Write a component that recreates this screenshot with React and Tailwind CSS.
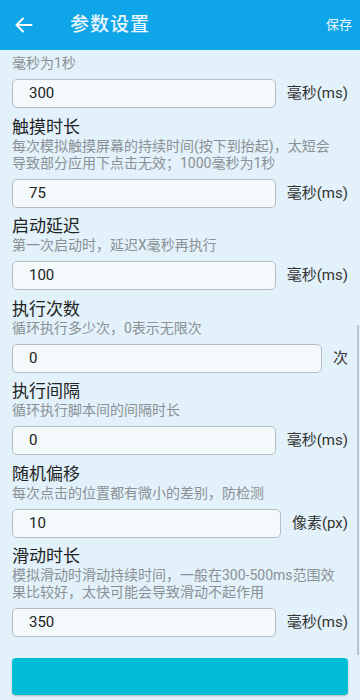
import React from 'react';

const font = { fontFamily: '"Roboto", "Noto Sans CJK SC", sans-serif' };

const sections = [
    { title: '触摸时长', desc: ['每次模拟触摸屏幕的持续时间(按下到抬起)，太短会', '导致部分应用下点击无效；1000毫秒为1秒'], value: '75', unit: '毫秒(ms)', w: 'w-[264px]' },
    { title: '启动延迟', desc: ['第一次启动时，延迟X毫秒再执行'], value: '100', unit: '毫秒(ms)', w: 'w-[264px]' },
    { title: '执行次数', desc: ['循环执行多少次，0表示无限次'], value: '0', unit: '次', w: 'w-[310px]' },
    { title: '执行间隔', desc: ['循环执行脚本间的间隔时长'], value: '0', unit: '毫秒(ms)', w: 'w-[264px]' },
    { title: '随机偏移', desc: ['每次点击的位置都有微小的差别，防检测'], value: '10', unit: '像素(px)', w: 'w-[269px]' },
    { title: '滑动时长', desc: ['模拟滑动时滑动持续时间，一般在300-500ms范围效', '果比较好，太快可能会导致滑动不起作用'], value: '350', unit: '毫秒(ms)', w: 'w-[264px]' },
];

const InputRow = ({ value, unit, w }) => (
    <div className="flex items-center justify-between mt-[7px]">
        <div className={`${w} h-[29px] rounded-[5px] border border-[#b5bec4] bg-[#f4f9fc] flex items-center pl-4 text-[15px] text-[#222]`}>
            {value}
        </div>
        <span className="text-[15px] text-[#333] leading-none">{unit}</span>
    </div>
);

const App = () => {
    return (
        <div className="w-[360px] h-[700px] overflow-hidden bg-[#e3f2fa] relative" style={font}>
            <div className="h-[50px] bg-[#0ea5e9] flex items-center">
                <svg width="18" height="16" viewBox="0 0 18 16" className="ml-[15px]" fill="none" stroke="#fff" strokeWidth="2" strokeLinecap="round" strokeLinejoin="round">
                    <path d="M16.5 8H2M8 1.5L1.5 8 8 14.5" />
                </svg>
                <span className="ml-[37px] text-[19px] font-medium text-[#eaf7fc] tracking-[1px]">参数设置</span>
                <span className="ml-auto mr-[8px] text-[13px] text-[#eaf7fc]">保存</span>
            </div>

            <div className="px-3 pt-[5px]">
                <div className="text-[14px] leading-[17px] text-[#8a9095]">毫秒为1秒</div>
                <div className="mt-[1px]">
                    <InputRow value="300" unit="毫秒(ms)" w="w-[264px]" />
                </div>

                {sections.map((s) => (
                    <div key={s.title} className="mt-[8.5px]">
                        <div className="text-[17px] leading-[21px] text-[#222]">{s.title}</div>
                        {s.desc.map((d) => (
                            <div key={d} className="text-[14px] leading-[17px] text-[#8a9095] whitespace-nowrap">{d}</div>
                        ))}
                        <InputRow value={s.value} unit={s.unit} w={s.w} />
                    </div>
                ))}

                <div className="mt-[21px] h-[37px] rounded-[4px] bg-[#00bcd4] shadow-[0_1px_2px_rgba(0,0,0,0.25)]"></div>
            </div>

            <div className="absolute right-[1px] top-[325px] w-[2px] h-[330px] bg-[#b9c6ce]"></div>
        </div>
    );
};

export default App;
